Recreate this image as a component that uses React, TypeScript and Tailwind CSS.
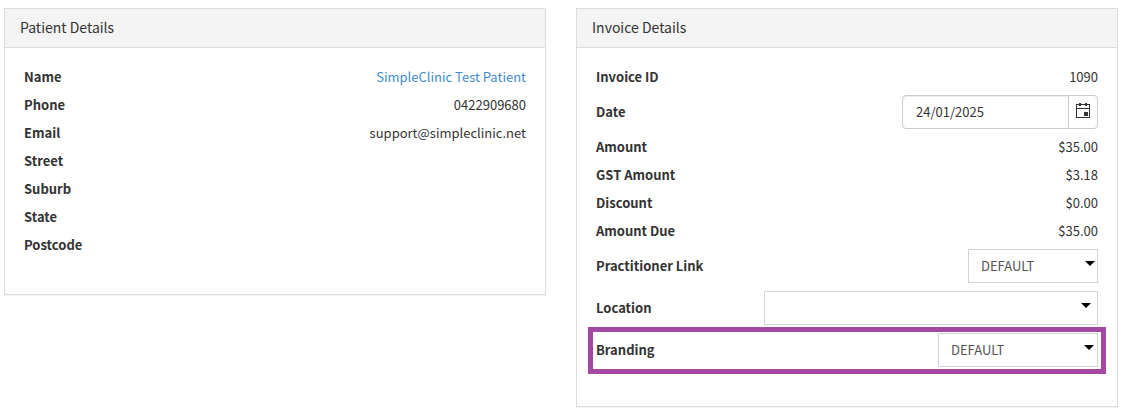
import { useState, type ReactNode } from "react";

function Panel({ title, children }: { title: string; children: ReactNode }) {
  return (
    <section className="border border-[#dddddd] bg-white shadow-[0_1px_1px_rgba(0,0,0,0.05)]">
      <h2 className="border-b border-[#dddddd] bg-[#f4f4f4] px-[15px] pt-2 pb-2.5 text-[14px] leading-5 font-normal">
        {title}
      </h2>
      <div className="px-[15px] pt-[15px] pb-[35px]">
        <table className="w-full border-collapse">
          <tbody>{children}</tbody>
        </table>
      </div>
    </section>
  );
}

type RowProps = {
  label: string;
  htmlFor?: string;
  highlighted?: boolean;
  children?: ReactNode;
};

function Row({ label, htmlFor, highlighted, children }: RowProps) {
  return (
    <tr className="relative">
      <th scope="row" className="p-1 text-left align-middle font-bold">
        {htmlFor ? <label htmlFor={htmlFor}>{label}</label> : label}
        {highlighted && (
          <span className="pointer-events-none absolute -inset-x-1 -top-0.5 -bottom-[3px] border-5 border-[#a349a4]" />
        )}
      </th>
      <td className="p-1 text-right align-middle">{children}</td>
    </tr>
  );
}

type SelectProps = {
  id: string;
  width: string;
  arrow: string;
  options: string[];
};

function Select({ id, width, arrow, options }: SelectProps) {
  return (
    <div className={`relative ml-auto ${width}`}>
      <select
        id={id}
        className="block h-[34px] w-full appearance-none border border-[#d2d2de] bg-white px-3 text-[#555555] outline-none"
      >
        {options.map((option) => (
          <option key={option}>{option}</option>
        ))}
      </select>
      <svg
        viewBox="0 0 10 5"
        className={`pointer-events-none absolute top-3 h-[5px] w-[10px] ${arrow}`}
        aria-hidden="true"
      >
        <path d="M0 0h10L5 5z" fill="#000" />
      </svg>
    </div>
  );
}

function DateField({ id }: { id: string }) {
  const [date, setDate] = useState("24/01/2025");
  return (
    <div className="ml-auto flex h-[34px] w-[196px] rounded border border-[#cccccc] bg-white">
      <input
        id={id}
        type="text"
        value={date}
        onChange={(event) => setDate(event.target.value)}
        className="min-w-0 flex-1 rounded-l px-[13px] shadow-[inset_0_1px_1px_rgba(0,0,0,0.075)] outline-none"
      />
      <button
        type="button"
        aria-label="Choose date"
        className="flex w-[29px] items-center justify-center border-l border-[#cccccc] pb-0.5"
      >
        <svg viewBox="0 0 14 16" className="h-4 w-3.5" fill="#333" aria-hidden="true">
          <path d="M0 1h14v14H0zM1 6v8h12V6zM1 2v3h12V2z" fillRule="evenodd" />
          <path d="M3 0h2v3H3zM9 0h2v3H9zM8 9h4v4H8z" />
        </svg>
      </button>
    </div>
  );
}

export default function App() {
  return (
    <main className="grid grid-cols-2 items-start gap-[30px] bg-white pt-2 pr-1.5 pb-1 pl-1 font-['Noto_Sans_CJK_SC',sans-serif] text-[13px] leading-5 text-[#333333]">
      <Panel title="Patient Details">
        <Row label="Name">
          <a href="#patient" className="text-[#428bca]">
            SimpleClinic Test Patient
          </a>
        </Row>
        <Row label="Phone">0422909680</Row>
        <Row label="Email">support@simpleclinic.net</Row>
        <Row label="Street" />
        <Row label="Suburb" />
        <Row label="State" />
        <Row label="Postcode" />
      </Panel>
      <Panel title="Invoice Details">
        <Row label="Invoice ID">1090</Row>
        <Row label="Date" htmlFor="invoice-date">
          <DateField id="invoice-date" />
        </Row>
        <Row label="Amount">$35.00</Row>
        <Row label="GST Amount">$3.18</Row>
        <Row label="Discount">$0.00</Row>
        <Row label="Amount Due">$35.00</Row>
        <Row label="Practitioner Link" htmlFor="practitioner-link">
          <Select id="practitioner-link" width="w-[130px]" arrow="right-[3px]" options={["DEFAULT"]} />
        </Row>
        <Row label="Location" htmlFor="location">
          <Select id="location" width="w-[334px]" arrow="right-[7px]" options={[""]} />
        </Row>
        <Row label="Branding" htmlFor="branding" highlighted>
          <Select id="branding" width="w-40" arrow="right-1" options={["DEFAULT"]} />
        </Row>
      </Panel>
    </main>
  );
}
